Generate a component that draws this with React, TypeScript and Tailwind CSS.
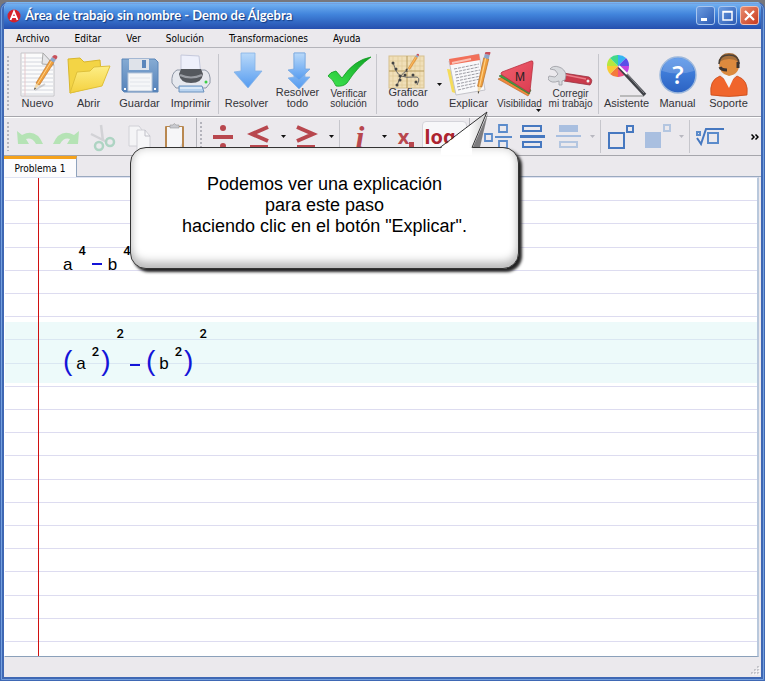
import type { ReactNode } from 'react';

const menus = ['Archivo', 'Editar', 'Ver', 'Solución', 'Transformaciones', 'Ayuda'];

const Pencil = () => (
  <g>
    <path d="M0 0 L2 -7 L5.500 -5 Z" fill="#f3d9a8" />
    <path d="M0 0 L.7 -2.500 L2 -1.700 Z" fill="#333" />
    <path d="M2 -7 L16 -30 L20 -27.500 L5.500 -5 Z" fill="#f0a03c" stroke="#b8702a" strokeWidth=".6" />
    <path d="M3.500 -6 L17.500 -29" stroke="#ffd28a" strokeWidth="1" />
    <path d="M16 -30 L18 -33 L22 -30.500 L20 -27.500 Z" fill="#8ea6c8" />
    <path d="M18 -33 Q20 -36 22.500 -34.500 Q24.500 -33 22 -30.500 Z" fill="#c8505a" />
  </g>
);

const NewIcon = () => (
  <>
    <path d="M6 1 H28 L39 13 V44 H6 Z" fill="#fbfbfb" stroke="#c4c4c8" />
    <path d="M7 6H27M7 10H29M7 14H38M7 18H38M7 22H38M7 26H38M7 30H38M7 34H38M7 38H38M7 42H38" stroke="#d3d6de" />
    <path d="M10 1V44" stroke="#e6c9cd" />
    <path d="M28 1 L27 12 L39 13 Z" fill="#e6e6e9" stroke="#aaa" />
    <path d="M20 38 L30 32" stroke="#aaa" strokeWidth="2" opacity=".5" />
    <g transform="translate(19 38)">
      <Pencil />
    </g>
  </>
);

const OpenIcon = () => (
  <>
    <path d="M2 7 L14 6 L18 10 L34 8 L36 33 L4 41 Z" fill="#f3d445" stroke="#d9b62c" />
    <path d="M4 41 L11 20 L24 19 L28 15 L44 14 L36 34 Z" fill="url(#folder)" stroke="#dfc03a" />
  </>
);

const SaveIcon = () => (
  <>
    <path d="M5 7 H38 L41 10 V40 H7 L5 38 Z" fill="url(#disk)" stroke="#5a85b8" />
    <rect x="12" y="7" width="20" height="11" fill="#dfe3ea" />
    <rect x="25" y="8" width="4" height="8" fill="#5b86bb" />
    <rect x="11" y="21" width="24" height="18" fill="#f5f6f8" stroke="#b7c6d9" />
    <path d="M13 26H33M13 30H33M13 34H33" stroke="#e1e4ea" />
    <path d="M7 37h2M37 37h2" stroke="#fff" strokeWidth="2" />
  </>
);

const PrintIcon = () => (
  <>
    <path d="M13 3 L31 4 L33 24 H13 Z" fill="#eef0fb" stroke="#c5c9dc" />
    <path d="M9 18 H37 Q43 20 42 31 L38 36 H8 L4 31 Q3 21 9 18Z" fill="#e6e8ee" stroke="#8f97a6" />
    <path d="M13 17 H33 L35 22 Q34 31 23 31 Q12 31 11 22Z" fill="#55585e" />
    <path d="M12 23 Q23 28 34 23" stroke="#9a9da4" strokeWidth="2" fill="none" />
    <circle cx="38" cy="30" r="1.500" fill="#3ccf45" />
    <path d="M11 34 H34 L36 40 H11 Z" fill="#b9d3ef" stroke="#6c93bf" />
    <path d="M12 36 H34" stroke="#fff" />
  </>
);

const SolveIcon = () => (
  <path d="M17 1 H31 V19 H38 L24 36 L10 20 L17 19 Z" fill="url(#arrow)" stroke="#85b2e6" strokeWidth=".8" />
);

const SolveAllIcon = () => (
  <>
    <path d="M19 1 H30 V25 H35 L24 37 L13 26 L19 25 Z" fill="url(#arrow)" stroke="#85b2e6" strokeWidth=".8" />
    <path d="M19 1 H30 V17 H35 L24 28 L13 18 L19 17 Z" fill="url(#arrow)" stroke="#78a8e0" strokeWidth=".8" />
  </>
);

const CheckIcon = () => (
  <path
    d="M2 24 Q4 20 10 19 L16 26 Q28 8 45 5 Q32 14 21 31 Q17 35 10 34 Q7 27 2 24Z"
    fill="url(#check)"
    stroke="#159c25"
    strokeWidth=".8"
  />
);

const GraphIcon = () => (
  <>
    <rect x="4" y="4" width="35" height="32" fill="#f0dfb8" stroke="#d6c08e" />
    <path d="M8 4V36M13 4V36M17 4V36M26 4V36M30 4V36M35 4V36M4 9H39M4 14H39M4 24H39M4 29H39M4 33H39" stroke="#dfca98" strokeWidth=".7" />
    <path d="M22 4V36M4 19H39" stroke="#b59a5c" />
    <path d="M8 10 Q11 22 16 24 T29 25 T32 33 M12 34 Q16 20 22 19" stroke="#666" fill="none" />
    <g fill="#444">
      <circle cx="8" cy="11" r="1.500" />
      <circle cx="11" cy="17" r="1.500" />
      <circle cx="15" cy="24" r="1.500" />
      <circle cx="12" cy="33" r="1.500" />
      <circle cx="15" cy="28" r="1.500" />
      <circle cx="20" cy="23" r="1.500" />
      <circle cx="22" cy="18" r="1.500" />
      <circle cx="28" cy="23" r="1.500" />
      <circle cx="31" cy="30" r="1.500" />
    </g>
    <g transform="translate(22 20) scale(.52)">
      <Pencil />
    </g>
  </>
);

const ExplainIcon = () => (
  <>
    <path d="M1 17 L8 18 L12 42 L6 40 Z" fill="#f5dc5a" />
    <path d="M3 9 L33 2 L39 38 L10 43 Z" fill="#f8f8fa" stroke="#c4c4ca" />
    <path d="M3 7 L33 2 L34 8 L4 13 Z" fill="#f2705a" />
    <path d="M6 11 L25 7" stroke="#fbc1b5" strokeWidth="2" />
    <path d="M8 17L33 12M9 20L33 15M9 23L34 18M10 26L34 21M10 29L35 24M11 32L34 27M11 35L30 31M12 38L29 34" stroke="#9c9ca4" strokeDasharray="3 1" />
    <g transform="translate(32 42) rotate(-19) scale(1.080)">
      <Pencil />
    </g>
  </>
);

const VisibilityIcon = () => (
  <>
    <path d="M1 27 L6 25 L33 41 L31 44 Z" fill="#f08a3c" stroke="#b8622a" strokeWidth=".6" />
    <path d="M2 24 L8 21 L34 38 L32 42 Z" fill="#3fa045" stroke="#2a7031" strokeWidth=".6" />
    <path d="M5 20 L34 9 Q36 8 36 11 L33 39 Q33 41 31 40 L5 23 Q3 21 5 20Z" fill="url(#tri)" stroke="#b8303f" strokeWidth=".8" />
    <text x="18" y="29" fontSize="12" fontFamily="Liberation Sans, sans-serif" fill="#222">M</text>
  </>
);

const WrenchIcon = () => (
  <>
    <path d="M15 21 L41 25 Q46 28 42 33 L16 29 Z" fill="#c93a4b" stroke="#98303e" strokeWidth=".8" />
    <path d="M18 23 L38 27" stroke="#ea7d88" strokeWidth="1.500" />
    <circle cx="40" cy="29" r="1.500" fill="#eee" />
    <path d="M2 17 Q5 13 11 15 Q17 17 18 23 L17 28 L14 29 V33 H11 V29 Q3 32 0 27 L1 24 L7 25 L10 22 L7 18Z" fill="#d8dade" stroke="#9a9ca2" strokeWidth=".8" />
  </>
);

const WizardIcon = () => (
  <>
    <path d="M14 14 L14 3 A11 11 0 0 1 22 6 Z" fill="#35b4f2" />
    <path d="M14 14 L22 6 A11 11 0 0 1 25 14 Z" fill="#5a50e8" />
    <path d="M14 14 L25 14 A11 11 0 0 1 22 22 Z" fill="#c443e0" />
    <path d="M14 14 L22 22 A11 11 0 0 1 14 25 Z" fill="#f0507e" />
    <path d="M14 14 L14 25 A11 11 0 0 1 6 22 Z" fill="#f57b3b" />
    <path d="M14 14 L6 22 A11 11 0 0 1 3 14 Z" fill="#f8cc35" />
    <path d="M14 14 L3 14 A11 11 0 0 1 6 6 Z" fill="#b6e83e" />
    <path d="M14 14 L6 6 A11 11 0 0 1 14 3 Z" fill="#42d98c" />
    <path d="M16 44 H40" stroke="#aaa" strokeWidth="1.500" />
    <path d="M15 15 L41 43" stroke="#3f4146" strokeWidth="3.500" />
    <path d="M15 14 L23 22" stroke="#fff" strokeWidth="2" />
    <path d="M23 22 L40 41" stroke="#8b8d93" />
  </>
);

const ManualIcon = () => (
  <>
    <circle cx="23" cy="23" r="18" fill="url(#ball)" stroke="#9db8dc" strokeWidth="1.500" />
    <path d="M7 19 Q10 6 23 6 Q36 6 39 19 Q23 24 7 19Z" fill="#fff" opacity=".18" />
    <text x="23" y="32" textAnchor="middle" fontSize="25" fontWeight="600" fontFamily="Open Sans, sans-serif" fill="#fff">?</text>
  </>
);

const SupportIcon = () => (
  <>
    <path d="M5 43 Q3 28 14 24 L23 31 L31 24 Q43 28 41 43 Q23 46 5 43Z" fill="#f0652c" stroke="#c94c1c" strokeWidth=".8" />
    <path d="M16 23 L23 36 L29 23 Z" fill="#f5f5f7" />
    <path d="M13 11 Q13 2 23 2 Q33 2 33 11 Q34 22 23 24 Q13 22 13 11Z" fill="#dc8a3e" />
    <path d="M13 10 Q14 1 23 1 Q32 1 33 10 Q23 4 13 10Z" fill="#a8703a" />
    <path d="M13 12 Q13 3 23 3 Q33 3 33 12" fill="none" stroke="#4a4038" strokeWidth="1.500" />
    <path d="M32 10 V16 M14 15 Q15 18 21 18" stroke="#3c3430" strokeWidth="3" fill="none" />
  </>
);

const Gradients = () => (
  <svg className="absolute size-0" aria-hidden="true">
    <defs>
      <linearGradient id="folder" x1="0" y1="0" x2="0" y2="1">
        <stop offset="0" stopColor="#fdee86" />
        <stop offset="1" stopColor="#f4d13f" />
      </linearGradient>
      <linearGradient id="disk" x1="0" y1="0" x2="0" y2="1">
        <stop offset="0" stopColor="#86abd3" />
        <stop offset="1" stopColor="#5582ba" />
      </linearGradient>
      <linearGradient id="arrow" x1="0" y1="0" x2="0" y2="1">
        <stop offset="0" stopColor="#b9d9f9" />
        <stop offset="1" stopColor="#559bf0" />
      </linearGradient>
      <linearGradient id="check" x1="1" y1="0" x2="0" y2="1">
        <stop offset="0" stopColor="#0fa324" />
        <stop offset="1" stopColor="#3fe550" />
      </linearGradient>
      <linearGradient id="tri" x1="0" y1="0" x2="1" y2="1">
        <stop offset="0" stopColor="#f0606f" />
        <stop offset="1" stopColor="#da3c50" />
      </linearGradient>
      <linearGradient id="ball" x1="0" y1="0" x2="0" y2="1">
        <stop offset="0" stopColor="#4d8ee8" />
        <stop offset="1" stopColor="#2b62c2" />
      </linearGradient>
      <linearGradient id="tail" x1="0" y1="0" x2="1" y2="0">
        <stop offset="0" stopColor="#fff" />
        <stop offset=".6" stopColor="#fff" />
        <stop offset="1" stopColor="#ccc" />
      </linearGradient>
    </defs>
  </svg>
);

const Grip = () => (
  <div className="my-1 mx-[3px] w-[2px] self-stretch bg-[repeating-linear-gradient(to_bottom,#b4b4bc_0_2px,transparent_2px_4px)]" />
);

const Separator = () => <div className="mx-0.5 my-0.5 w-px self-stretch bg-[#c6c6cc]" />;

const Caret = ({ light = false }: { light?: boolean }) => (
  <svg viewBox="0 0 5 3" className="h-[3px] w-[5px]" fill={light ? '#b8b8c0' : '#111'}>
    <path d="M0 0 H5 L2.500 3 Z" />
  </svg>
);

const CaretButton = ({ label, light }: { label: string; light?: boolean }) => (
  <button type="button" aria-label={label} className="flex h-9 w-3 shrink-0 items-center justify-center">
    <Caret light={light} />
  </button>
);

interface ToolProps {
  label: ReactNode;
  wide?: boolean;
  caret?: boolean;
  small?: boolean;
  children: ReactNode;
}

const Tool = ({ label, wide, caret, small, children }: ToolProps) => (
  <button
    type="button"
    className={`grid h-16 shrink-0 justify-items-center text-[#333338] ${wide ? 'w-[58px]' : 'w-[51px]'}`}
  >
    <svg viewBox="0 0 46 46" className="col-start-1 row-start-1 size-[46px]">
      {children}
    </svg>
    <span
      className={`col-start-1 row-start-1 self-end whitespace-nowrap ${small ? 'mb-[7px] text-[10px] leading-[10px]' : 'mb-[7px] text-[11px] leading-[11px]'}`}
    >
      {label}
    </span>
    {caret && (
      <span className="col-start-1 row-start-1 mb-1 mr-1 self-end justify-self-end">
        <Caret />
      </span>
    )}
  </button>
);

const MathTool = ({ label, children }: { label: string; children: ReactNode }) => (
  <button type="button" aria-label={label} className="flex h-9 w-9 shrink-0 items-center justify-center">
    <svg viewBox="0 0 36 36" className="size-9 shrink-0" fill="none">
      {children}
    </svg>
  </button>
);

const Sup = ({ children }: { children: ReactNode }) => (
  <span className="font-['Roboto'] text-[13px] leading-3 font-medium text-black">{children}</span>
);

const Minus = () => (
  <span className="h-0.5 w-2.5 bg-[#1414d8]" role="img" aria-label="menos" />
);

const Paren = ({ children }: { children: ReactNode }) => (
  <span className="text-[28px] leading-[30px] text-[#1414d8]">{children}</span>
);

const Squared = ({ name }: { name: string }) => (
  <div className="flex items-start">
    <div className="mt-[18px] flex">
      <Paren>(</Paren>
      <span className="mt-2 ml-1 text-[17px] leading-5">{name}</span>
      <span className="mr-0.5 ml-1.5 flex">
        <Sup>2</Sup>
      </span>
      <Paren>)</Paren>
    </div>
    <span className="ml-1.5 flex">
      <Sup>2</Sup>
    </span>
  </div>
);

const App = () => {
  return (
    <div className="flex min-h-screen flex-col bg-[#77777c] pt-0.5 font-['Liberation_Sans',sans-serif] text-black">
      <Gradients />
      <div className="relative flex flex-1 flex-col overflow-hidden rounded-t-lg border-x-4 border-b-4 border-[#3f68b4] bg-[#ebe9ed] outline-1 -outline-offset-2 outline-[#74a0de]">
        <header className="-mx-1 flex h-[27px] items-center gap-1 bg-linear-to-b from-[#7ab8f4] via-[#4285dc] via-45% to-[#264fae] pr-1.5 pl-[7px]">
          <svg viewBox="0 0 14 14" className="size-[14px]">
            <circle cx="7" cy="7" r="6.500" fill="#d4222c" />
            <path d="M3.500 11 L7 2.500 L10.500 11 M5 8 H9" stroke="#fff" strokeWidth="1.800" fill="none" />
          </svg>
          <h1 className="flex-1 font-['Lato'] text-[13px] font-bold text-white [text-shadow:1px_1px_1px_#123a80]">
            Área de trabajo sin nombre - Demo de Álgebra
          </h1>
          <div className="flex gap-[3px]">
            <button type="button" aria-label="Minimizar" className="size-[19px] rounded-[3px] border border-[#a9c6ee] bg-linear-to-br from-[#6c9ce0] to-[#2d5bb4]">
              <svg viewBox="0 0 17 17"><path d="M4 12.500H10" stroke="#fff" strokeWidth="3" /></svg>
            </button>
            <button type="button" aria-label="Maximizar" className="size-[19px] rounded-[3px] border border-[#a9c6ee] bg-linear-to-br from-[#6c9ce0] to-[#2d5bb4]">
              <svg viewBox="0 0 17 17"><path d="M4 4.500H13V13H4Z M4 5H13" stroke="#fff" strokeWidth="1.500" fill="none" /></svg>
            </button>
            <button type="button" aria-label="Cerrar" className="size-[19px] rounded-[3px] border border-[#efc0b4] bg-linear-to-br from-[#e88a6c] to-[#c8381c]">
              <svg viewBox="0 0 17 17"><path d="M4 4L13 13M13 4L4 13" stroke="#fff" strokeWidth="2.200" /></svg>
            </button>
          </div>
        </header>

        <nav className="flex h-[19px] items-center gap-[25px] border-b border-[#b4b4ba] pl-3 font-['DejaVu_Sans_Condensed'] text-[10px]">
          {menus.map((menu) => (
            <button type="button" key={menu}>{menu}</button>
          ))}
        </nav>

        <div className="flex border-b border-[#a6a6ac] pt-1">
          <Grip />
          <Tool label="Nuevo"><NewIcon /></Tool>
          <Tool label="Abrir"><OpenIcon /></Tool>
          <Tool label="Guardar"><SaveIcon /></Tool>
          <Tool label="Imprimir"><PrintIcon /></Tool>
          <Separator />
          <Tool label="Resolver"><SolveIcon /></Tool>
          <Tool label={<>Resolver<br />todo</>}><SolveAllIcon /></Tool>
          <Tool label={<>Verificar<br />solución</>} small><CheckIcon /></Tool>
          <Separator />
          <Tool label={<>Graficar<br />todo</>} wide><GraphIcon /></Tool>
          <button type="button" aria-label="Opciones de gráfico" className="flex w-1.5 items-center">
            <Caret />
          </button>
          <Tool label="Explicar"><ExplainIcon /></Tool>
          <Tool label="Visibilidad" small caret><VisibilityIcon /></Tool>
          <Tool label={<>Corregir<br />mi trabajo</>} small><WrenchIcon /></Tool>
          <Separator />
          <Tool label="Asistente"><WizardIcon /></Tool>
          <Tool label="Manual"><ManualIcon /></Tool>
          <Tool label="Soporte"><SupportIcon /></Tool>
        </div>

        <div className="flex h-[39px] items-center border-t border-b border-t-white border-b-[#a6a6ac]">
          <Grip />
          <MathTool label="Deshacer">
            <path d="M5 12 L10 16 Q24 9 31 25 L24 25 Q20 18 14 20 L17 25 H6 Z" fill="#b5e3b5" />
          </MathTool>
          <MathTool label="Rehacer">
            <path d="M31 12 L26 16 Q12 9 5 25 L12 25 Q16 18 22 20 L19 25 H30 Z" fill="#b5e3b5" />
          </MathTool>
          <MathTool label="Cortar">
            <path d="M17 6 L19 22 M7 15 L23 23" stroke="#d2d2d6" strokeWidth="2.500" />
            <circle cx="15" cy="27" r="4" stroke="#aed4c3" strokeWidth="2.500" />
            <circle cx="26" cy="23" r="4" stroke="#aed4c3" strokeWidth="2.500" />
          </MathTool>
          <MathTool label="Copiar">
            <path d="M9 7 H19 L22 11 V27 H9 Z" fill="#f4f4f6" stroke="#d0d0d6" />
            <path d="M17 11 H25 L30 17 V32 H17 Z" fill="#f6f6f8" stroke="#d0d0d6" />
            <path d="M25 11 V17 H30" stroke="#c0c0c8" />
          </MathTool>
          <MathTool label="Pegar">
            <rect x="9" y="7" width="19" height="26" rx="1" fill="#b98850" />
            <path d="M11 8 H26 V33 H11 Z" fill="#f6f6f8" />
            <path d="M14 6 H17 Q18 3 20 6 H23 V9 H14 Z" fill="#c9cad0" stroke="#999" strokeWidth=".6" />
            <path d="M21 33 L26 24 V33Z" fill="#d8d8de" />
          </MathTool>
          <div className="ml-1 w-px self-stretch bg-[#b4b4ba]" />
          <Grip />
          <MathTool label="División">
            <path d="M8 18 H28" stroke="#b8474e" strokeWidth="4" />
            <circle cx="18" cy="9" r="3" fill="#b8474e" />
            <circle cx="18" cy="27" r="3" fill="#b8474e" />
          </MathTool>
          <MathTool label="Menor o igual">
            <path d="M27 8 L11 15 L27 22 M9 28 H27" stroke="#b8474e" strokeWidth="4" />
          </MathTool>
          <CaretButton label="Más comparaciones menores" />
          <MathTool label="Mayor o igual">
            <path d="M8 8 L24 15 L8 22 M8 28 H26" stroke="#b8474e" strokeWidth="4" />
          </MathTool>
          <CaretButton label="Más comparaciones mayores" />
          <Separator />
          <button type="button" className="h-9 w-9 shrink-0 font-['Liberation_Serif',serif] text-[32px] leading-9 font-bold text-[#b8474e] italic">i</button>
          <CaretButton label="Más constantes" />
          <button type="button" className="flex h-9 w-8 shrink-0 items-center justify-center font-['Noto_Sans'] text-[20px] leading-none font-bold text-[#b8474e]">
            x<span className="mt-4 size-[5px] bg-[#b8474e]" />
          </button>
          <div className="flex h-8 w-[45px] shrink-0 rounded-sm border border-[#d4d4da] bg-[#f7f7f9]">
            <button type="button" className="w-[34px] font-['Noto_Sans'] text-[20px] leading-6 font-bold text-[#ad2430]">log</button>
            <button type="button" aria-label="Más logaritmos" className="flex w-2 items-center"><Caret /></button>
          </div>
          <div className="mr-2 ml-0.5 w-px self-stretch bg-[#b4b4ba]" />
          <MathTool label="Número mixto">
            <path d="M7 15h7v7h-7z M21 6h8v7h-8z M21 22h8v7h-8z" stroke="#5b8bcb" strokeWidth="1.800" />
            <path d="M17 18 H34" stroke="#5b8bcb" strokeWidth="2" />
          </MathTool>
          <MathTool label="Fracción">
            <path d="M9 7h18v5h-18z M9 23h18v5h-18z" stroke="#4678c0" strokeWidth="2" />
            <path d="M6 17.500 H31" stroke="#4678c0" strokeWidth="3" />
          </MathTool>
          <MathTool label="Fracción parcial">
            <path d="M10 7h17v5h-17z" fill="#a9bfe0" stroke="#a9bfe0" strokeWidth="2" />
            <path d="M10 23h17v5h-17z" stroke="#b4c6e0" strokeWidth="2" />
            <path d="M6 17 H31" stroke="#a9bfe0" strokeWidth="2" />
          </MathTool>
          <CaretButton label="Más fracciones" light />
          <Separator />
          <MathTool label="Potencia">
            <path d="M6 14h15v15h-15z M24 7h6v6h-6z" stroke="#4678c0" strokeWidth="2" />
          </MathTool>
          <MathTool label="Base">
            <path d="M6 13h16v16h-16z" fill="#a9bfe0" />
            <path d="M25 6h6v6h-6z" stroke="#b4c6e0" strokeWidth="2" />
          </MathTool>
          <CaretButton label="Más potencias" light />
          <Separator />
          <MathTool label="Raíz">
            <path d="M5 13h3v3h-3z M16 14h10v10h-10z" stroke="#5b8bcb" strokeWidth="2" />
            <path d="M5 19 L9 25 L14 10 H32" stroke="#4678c0" strokeWidth="2" />
          </MathTool>
          <button type="button" aria-label="Más herramientas" className="mr-0.5 ml-auto">
            <svg viewBox="0 0 8 6" className="h-1.5 w-2" fill="none" stroke="#000" strokeWidth="1.500">
              <path d="M.5 .5 L3 3 L.5 5.500 M4.500 .5 L7 3 L4.500 5.500" />
            </svg>
          </button>
        </div>

        <main className="flex flex-1 flex-col">
          <div className="flex h-[21px] border-b border-[#9aa9bf]">
            <button type="button" className="-mb-px h-[21px] w-[73px] border-t-[3px] border-r border-t-[#f5a21c] border-r-[#8fa3bd] bg-[#fcfcfd] font-['DejaVu_Sans_Condensed'] text-[10px]">
              Problema 1
            </button>
          </div>
          <div className="relative mr-0.5 flex-1 border-r-2 border-b border-l border-t border-t-[#dfe3f2] border-r-[#b9c8dc] border-b-[#8ba0ba] border-l-white bg-white">
            <div className="absolute inset-x-0 top-0 bottom-[14px] flex flex-col">
              {Array.from({ length: 20 }, (_, i) => (
                <div key={i} className="flex-1 border-b border-[#dddcf0]" />
              ))}
            </div>
            <div className="absolute inset-y-0 left-[33px] z-10 w-px bg-[#d01010]" />
            <section className="relative flex h-[144px] items-start pt-[67px] pl-[58px]">
              <span className="mt-2.5 text-[17px] leading-5">a</span>
              <span className="ml-1.5 flex"><Sup>4</Sup></span>
              <span className="mt-[18px] ml-1.5 flex"><Minus /></span>
              <span className="mt-2.5 ml-1.5 text-[17px] leading-5">b</span>
              <span className="ml-1.5 flex"><Sup>4</Sup></span>
            </section>
            <section className="relative flex h-[61px] items-start bg-[#d8f3f3]/45 pt-1.5 pl-[58px]">
              <Squared name="a" />
              <span className="mt-[36px] ml-1.5 flex"><Minus /></span>
              <span className="ml-1.5 flex"><Squared name="b" /></span>
            </section>
          </div>
        </main>

        <footer className="flex h-5 shrink-0 items-end justify-end">
          <svg viewBox="0 0 12 12" className="size-3">
            <path d="M8 2h2M5 5h2M8 5h2M2 8h2M5 8h2M8 8h2" stroke="#c4c4ca" strokeWidth="2" />
            <path d="M9 3h2M6 6h2M9 6h2M3 9h2M6 9h2M9 9h2" stroke="#fff" />
          </svg>
        </footer>

        <aside className="absolute top-[145px] left-[126px] w-[389px]">
          <div className="flex h-[122px] items-center justify-center rounded-2xl border border-[#333] bg-white pb-1.5 text-center text-[18px] leading-[21px] shadow-[3px_3px_3px_#222,inset_0_-8px_10px_-2px_#bbb,inset_0_0_8px_#ccc]">
            <p>
              Podemos ver una explicación
              <br />
              para este paso
              <br />
              haciendo clic en el botón "Explicar".
            </p>
          </div>
          <svg viewBox="0 0 60 44" className="absolute -top-9 left-[306px] h-11 w-[60px]">
            <path d="M37 36 L52 2 L44 36Z" fill="#333" opacity=".6" />
            <path d="M5 37 L51 1 L36 37 V44 H5Z" fill="url(#tail)" />
            <path d="M5 37 V44 H36 V37Z" fill="#fff" />
            <path d="M4 36.500 L51 1 L36 36.500" stroke="#333" fill="none" />
          </svg>
        </aside>
      </div>
    </div>
  );
};

export default App;
